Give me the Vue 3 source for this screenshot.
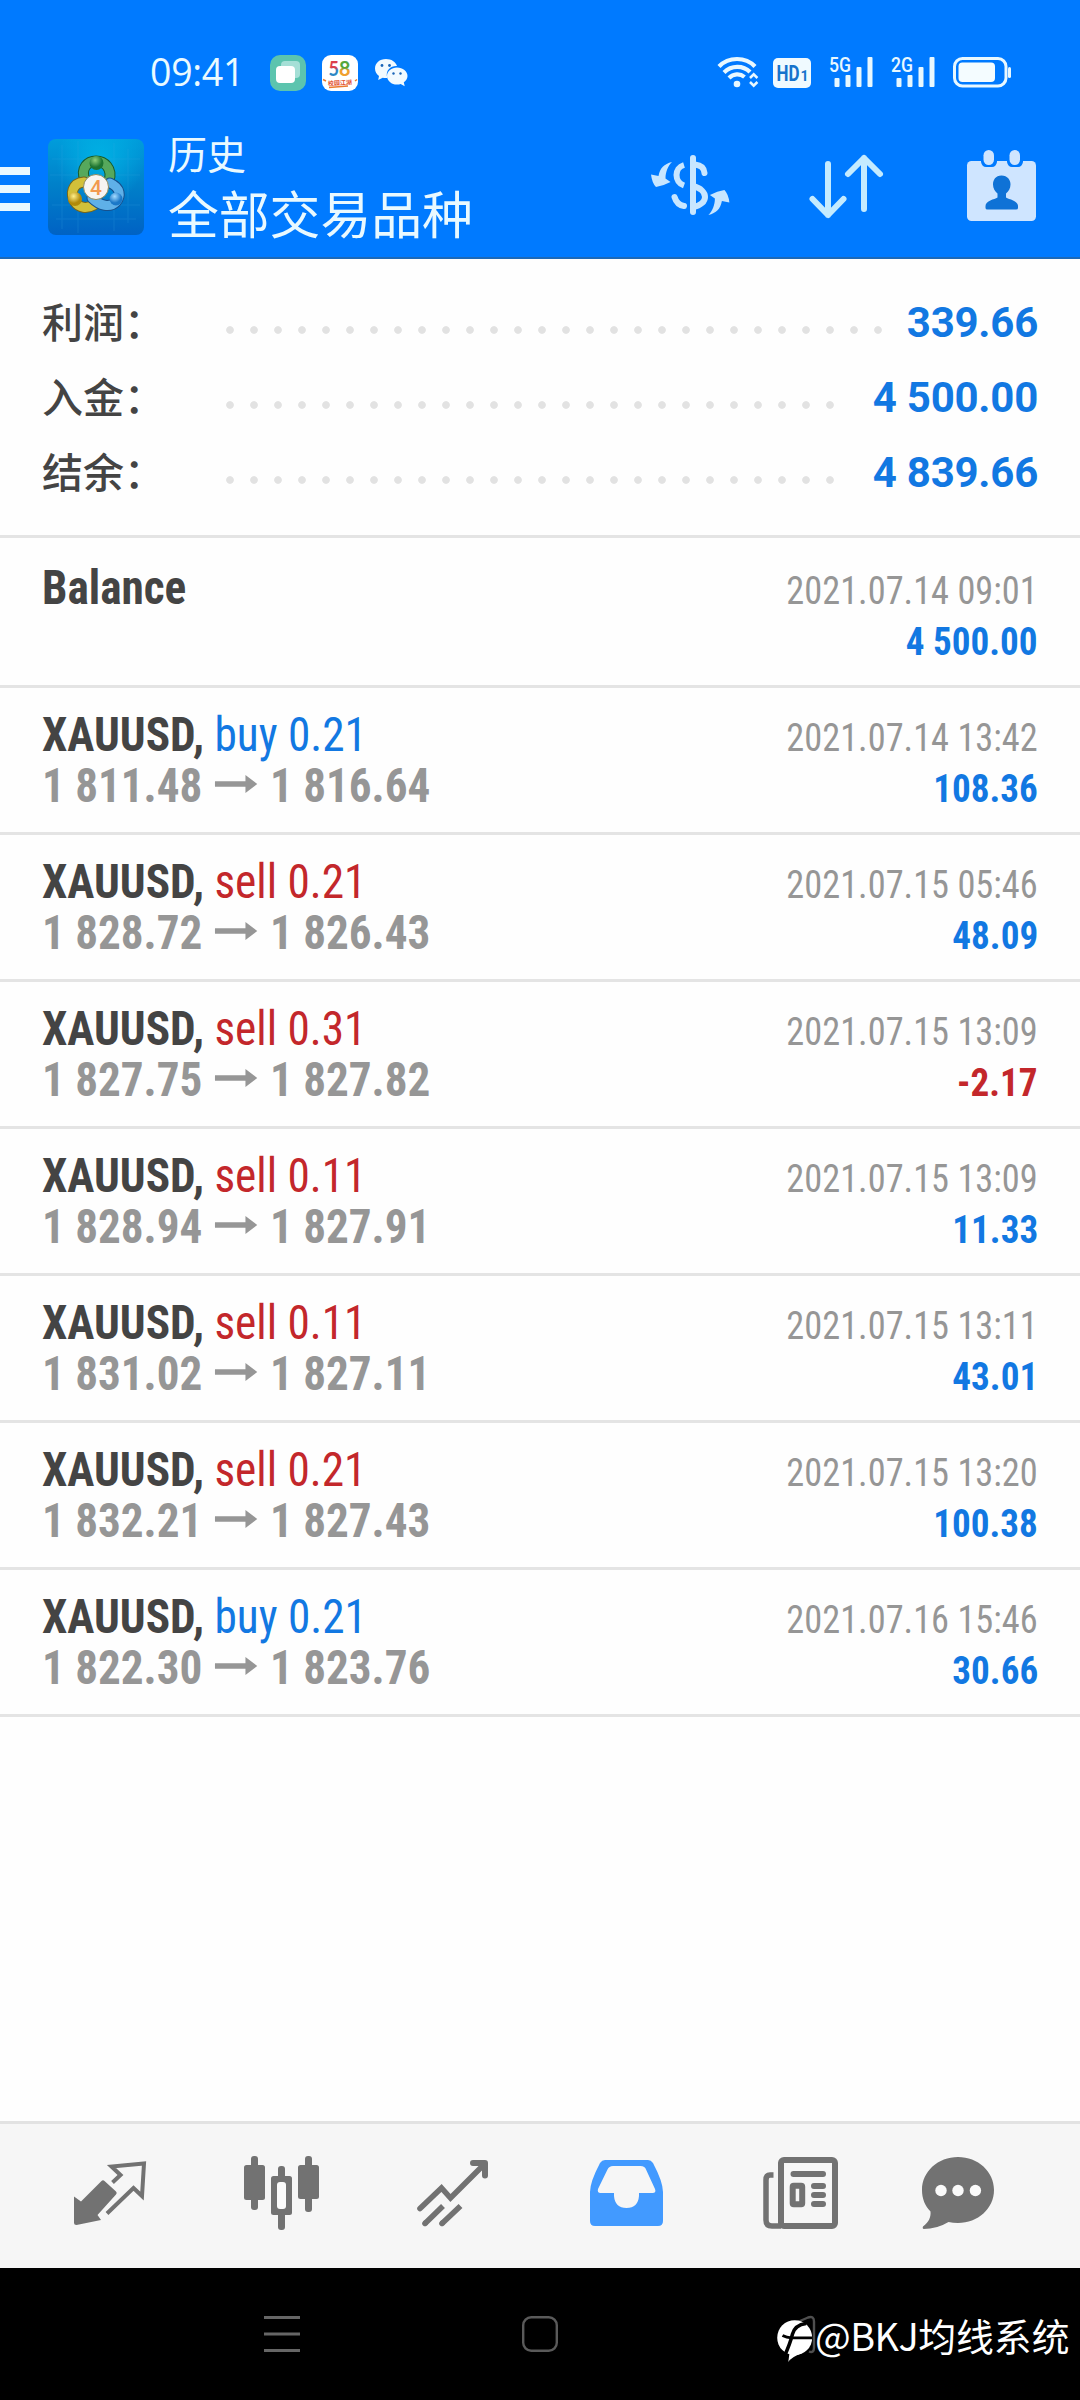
<script setup>
const summary = [
  { label: '利润', value: '339.66', dots: 28 },
  { label: '入金', value: '4 500.00', dots: 26 },
  { label: '结余', value: '4 839.66', dots: 26 },
]

const deals = [
  { side: 'buy', volume: '0.21', open: '1 811.48', close: '1 816.64', time: '2021.07.14 13:42', profit: '108.36' },
  { side: 'sell', volume: '0.21', open: '1 828.72', close: '1 826.43', time: '2021.07.15 05:46', profit: '48.09' },
  { side: 'sell', volume: '0.31', open: '1 827.75', close: '1 827.82', time: '2021.07.15 13:09', profit: '-2.17' },
  { side: 'sell', volume: '0.11', open: '1 828.94', close: '1 827.91', time: '2021.07.15 13:09', profit: '11.33' },
  { side: 'sell', volume: '0.11', open: '1 831.02', close: '1 827.11', time: '2021.07.15 13:11', profit: '43.01' },
  { side: 'sell', volume: '0.21', open: '1 832.21', close: '1 827.43', time: '2021.07.15 13:20', profit: '100.38' },
  { side: 'buy', volume: '0.21', open: '1 822.30', close: '1 823.76', time: '2021.07.16 15:46', profit: '30.66' },
]
</script>

<template>
  <div class="screen">
    <header class="header">
      <div class="status">
        <span class="clock">09:41</span>
        <svg class="app-a" width="36" height="36" viewBox="0 0 36 36">
          <rect width="36" height="36" rx="10" fill="#5cc4ae" />
          <rect x="11" y="6" width="19" height="17" rx="4" fill="#a5dfd6" />
          <rect x="6" y="11" width="19" height="17" rx="4" fill="#fff" />
        </svg>
        <svg class="app-b" width="36" height="36" viewBox="0 0 36 36">
          <defs>
            <linearGradient id="five" x1="0" y1="0" x2="0" y2="1"><stop offset=".5" stop-color="#dc3f4c" /><stop offset=".62" stop-color="#2d86c4" /></linearGradient>
            <linearGradient id="eight" x1="0" y1="0" x2="0" y2="1"><stop offset=".5" stop-color="#55a63a" /><stop offset=".62" stop-color="#f0a030" /></linearGradient>
          </defs>
          <rect width="36" height="36" rx="9" fill="#fff" />
          <g class="fifty-eight" font-size="21" font-weight="700">
            <text x="6.500" y="21" textLength="10.500" lengthAdjust="spacingAndGlyphs" fill="url(#five)">5</text>
            <text x="17" y="21" textLength="11.500" lengthAdjust="spacingAndGlyphs" fill="url(#eight)">8</text>
          </g>
          <text class="slogan" x="6" y="30" font-size="6" font-weight="700" textLength="24" fill="#e2512f" transform="rotate(-3 18 28)">校园江湖</text>
          <path d="M7 32.500l19-1.400M1 24.500l3 1.500M35 24.500l-2 1.500" stroke="#ea7a2f" stroke-width="1.500" />
        </svg>
        <svg class="wechat" width="33" height="29" viewBox="0 0 33 29">
          <path d="M11 1C4.500 1 0 5.200 0 10.500c0 3 1.500 5.600 4 7.400L3.200 22l4.500-2.300c1.500.4 3 .5 4.600.3C10 12 16 7.600 22 8 20.700 3.800 16.300 1 11 1z" fill="#f2fbff" />
          <path d="M22 9.500c-5.500 0-10 3.700-10 8.500s4.500 8.600 10 8.600c1.300 0 2.600-.2 3.700-.6l4 2.200-.9-3.900c2.300-1.600 3.700-3.800 3.700-6.300 0-4.800-4.700-8.500-10.500-8.500z" fill="#f2fbff" />
          <circle cx="7" cy="7.500" r="1.400" fill="#1a66b8" /><circle cx="14.500" cy="7.500" r="1.400" fill="#1a66b8" />
          <circle cx="18.500" cy="15.500" r="1.200" fill="#1a66b8" /><circle cx="25.500" cy="15.500" r="1.200" fill="#1a66b8" />
        </svg>
        <span class="grow"></span>
        <svg class="wifi" width="41" height="31" viewBox="0 0 41 31">
          <g fill="none" stroke="#e8f8ff" stroke-width="4.200">
            <path d="M1 9.500C10.500-.5 27.500-.5 37 9.500" />
            <path d="M6 15.500c7.500-7.400 19-7.400 26-.5" />
            <path d="M11 21c4.500-4.500 11-4.800 15.500-1" />
          </g>
          <circle cx="19" cy="27" r="3.300" fill="#e8f8ff" />
          <path d="M32 21l3.700-3.700 3.700 3.700M32 25l3.700 3.700 3.700-3.700" fill="none" stroke="#e8f8ff" stroke-width="2.500" />
        </svg>
        <svg class="hd" width="38" height="30" viewBox="0 0 38 30">
          <rect width="38" height="30" rx="5" fill="#f0faff" />
          <text x="3.500" y="23" font-size="22" font-weight="700" textLength="23" lengthAdjust="spacingAndGlyphs" fill="#1673cc">HD</text>
          <text x="27.500" y="23" font-size="14" font-weight="700" fill="#1673cc">1</text>
        </svg>
        <svg v-for="g in ['5G', '2G']" :key="g" class="signal" width="44" height="31" viewBox="0 0 44 31">
          <text x="0" y="14.500" font-size="20" font-weight="500" textLength="22" lengthAdjust="spacingAndGlyphs" fill="#e8f8ff">{{ g }}</text>
          <g fill="#e8f8ff">
            <rect x="5.500" y="21" width="5" height="9" rx="1" /><rect x="16.500" y="18" width="5" height="12" rx="1" />
            <rect x="27.500" y="10" width="5" height="20" rx="1" /><rect x="38.500" y="0" width="5" height="30" rx="1" />
          </g>
        </svg>
        <svg class="battery" width="59" height="31" viewBox="0 0 59 31">
          <rect x="1.500" y="1.500" width="51.500" height="27.500" rx="8" fill="none" stroke="#e8f8ff" stroke-width="3" />
          <rect x="5.500" y="5.500" width="36.500" height="19.500" rx="4" fill="#f4fcff" />
          <rect x="55" y="10" width="3" height="11" rx="1.500" fill="#e8f8ff" />
        </svg>
      </div>

      <div class="appbar">
        <div class="burger"><i></i><i></i><i></i></div>
        <svg class="logo" width="96" height="96" viewBox="0 0 96 96">
          <defs>
            <linearGradient id="tile" x1="0" y1="0" x2="0" y2="1">
              <stop offset="0" stop-color="#009ddb" /><stop offset=".5" stop-color="#007fc9" /><stop offset="1" stop-color="#0062c4" />
            </linearGradient>
            <radialGradient id="tg" cx=".4" cy=".3"><stop offset="0" stop-color="#8fd07c" /><stop offset="1" stop-color="#1d7431" /></radialGradient>
            <radialGradient id="ty" cx=".4" cy=".3"><stop offset="0" stop-color="#fff08a" /><stop offset="1" stop-color="#b08a0a" /></radialGradient>
            <radialGradient id="tb" cx=".4" cy=".3"><stop offset="0" stop-color="#a5dcff" /><stop offset="1" stop-color="#1b78c8" /></radialGradient>
            <radialGradient id="glow" gradientUnits="userSpaceOnUse" cx="52" cy="22" r="44"><stop offset="0" stop-color="#00c4ee" stop-opacity=".65" /><stop offset="1" stop-color="#00c4ee" stop-opacity="0" /></radialGradient>
          </defs>
          <rect width="96" height="96" rx="8" fill="url(#tile)" />
          <rect width="96" height="96" rx="8" fill="url(#glow)" />
          <path d="M14 6v84M30 2v92M66 4v88M80 10v74M4 20h88M2 36h90M4 66h88M8 80h80" stroke="#38b4e8" stroke-opacity=".14" stroke-width="1.500" />
          <g stroke-linecap="round" fill="none">
            <path d="M37 41C32 29 40 22 48 22s17 7 13 20" stroke="#195c2a" stroke-width="11" />
            <path d="M37 41C32 29 40 22 48 22s17 7 13 20" stroke="#56a85c" stroke-width="9" />
            <path d="M36 43c-12 1-14 12-9 20 4 6 12 7 19 3" stroke="#76651a" stroke-width="11" />
            <path d="M36 43c-12 1-14 12-9 20 4 6 12 7 19 3" stroke="#d2c03a" stroke-width="9" />
            <path d="M62 44c11 5 11 13 6 19-6 6-16 4-24-4" stroke="#17508c" stroke-width="11" />
            <path d="M62 44c11 5 11 13 6 19-6 6-16 4-24-4" stroke="#5fb0e8" stroke-width="9" />
          </g>
          <circle cx="48.500" cy="24" r="7" fill="url(#tg)" />
          <circle cx="27" cy="60" r="7" fill="url(#ty)" />
          <circle cx="68" cy="60" r="6.500" fill="url(#tb)" />
          <circle cx="48" cy="48" r="12.500" fill="#f7f5f2" stroke="#8d8a5e" stroke-width="1" />
          <text x="48" y="55.500" text-anchor="middle" font-size="21" font-weight="500" fill="#f29a50">4</text>
        </svg>
        <div class="titles">
          <div class="sub">历史</div>
          <div class="main">全部交易品种</div>
        </div>
        <span class="grow"></span>
        <svg class="act-currency" width="78" height="67" viewBox="0 0 78 67">
          <g fill="none" stroke="#c8e6ff" stroke-width="6">
            <path d="M42 3v54" stroke-linecap="round" />
            <path d="M33 10C23 13 23 27 33 30.500" />
            <path d="M44 9.500q9 1 9.500 8.500" stroke-linecap="round" />
            <path d="M42 31c16 4 16 18 0 21" />
            <path d="M33 51q-7-1-9.500-9" stroke-linecap="round" />
          </g>
          <path id="swap" d="M21 7C13 9 9 13 7.500 21L0 19.500Q1 28 5 32 12 31 19.500 27L14.500 23.500C14.500 17 17 11 21 7z" fill="#c8e6ff" />
          <use href="#swap" transform="rotate(180 39.200 33.500)" />
        </svg>
        <svg class="act-sort" width="74" height="65" viewBox="0 0 74 65">
          <path d="M19 9v51M3.500 44L19 60l15.500-16M55 3v51M39 19L55 3l16 16" fill="none" stroke="#c4ebff" stroke-width="6" stroke-linecap="round" stroke-linejoin="round" />
        </svg>
        <svg class="act-range" width="69" height="71" viewBox="0 0 69 71">
          <rect y="11" width="69" height="60" rx="4.500" fill="#cfe5ff" />
          <path d="M14 8h16v4q-1 5-5 5h-6q-4 0-5-5zM40 8h16v4q-1 5-5 5h-6q-4 0-5-5z" fill="#007aff" />
          <rect x="16.500" y="0" width="10.500" height="15" rx="5.200" fill="#cfe5ff" /><rect x="42.500" y="0" width="10.500" height="15" rx="5.200" fill="#cfe5ff" />
          <path d="M34.500 25.500c-6 0-8.500 4.500-8.500 9 0 4 2 7 4.500 9v4c-3 2-12 3-12 8.500V58q0 1.500 2 1.500h28.500q2 0 2-1.500v-2c0-5.500-9-6.500-12-8.500v-4c2.500-2 4.500-5 4.500-9 0-4.500-3-9-9-9z" fill="#0f72d6" />
        </svg>
      </div>
    </header>

    <section class="summary">
      <div v-for="row in summary" :key="row.label" class="sum-row">
        <span class="sum-label">{{ row.label }}：</span>
        <span class="leader" :style="{ width: row.dots * 24 + 'px' }"></span>
        <span class="sum-value">{{ row.value }}</span>
      </div>
    </section>

    <main class="list">
      <article class="deal first">
        <div class="line"><b class="symbol">Balance</b><span class="time">2021.07.14 09:01</span></div>
        <div class="line"><span>&nbsp;</span><b class="profit">4 500.00</b></div>
      </article>
      <article v-for="d in deals" :key="d.open" class="deal">
        <div class="line">
          <span class="title"><b class="symbol">XAUUSD,</b> <span :class="d.side">{{ d.side }} {{ d.volume }}</span></span>
          <span class="time">{{ d.time }}</span>
        </div>
        <div class="line">
          <b class="prices">{{ d.open }}<svg class="arrow" width="45" height="18" viewBox="0 0 43 18" preserveAspectRatio="none"><path d="M0 6.200h31V0l12 9-12 9v-6.300H0z" fill="#969696" /></svg>{{ d.close }}</b>
          <b class="profit" :class="{ loss: d.profit[0] === '-' }">{{ d.profit }}</b>
        </div>
      </article>
    </main>

    <nav class="tabs">
      <svg width="72" height="64" viewBox="0 0 72 64">
        <path d="M0 35.500L7 40.500 27.500 20q1.500-1.500 3 0L42 30.500q1.500 1.500 0 3L23.500 54l3.500 5L2.500 64Q0 64 0 61.500z" fill="#727272" />
        <path d="M38.500 21.500L46.500 14 37.500 5.500 70 2.500 68 35 59.500 27 33 52.500" fill="none" stroke="#727272" stroke-width="4" />
      </svg>
      <svg width="75" height="74" viewBox="0 0 75 74" fill="#727272">
        <rect width="21" height="35" y="9" rx="2.500" /><rect x="7" width="7" height="54" rx="3" />
        <rect x="54" width="21" height="34" y="9" rx="2.500" /><rect x="61" width="7" height="56" rx="3" />
        <rect x="34" y="10" width="7" height="64" rx="3" /><rect x="27" y="20" width="21" height="39" rx="2.500" />
        <rect x="33" y="26" width="9" height="27" rx="3" fill="#fafafa" />
      </svg>
      <svg width="71" height="66" viewBox="0 0 71 66" fill="none" stroke="#727272" stroke-width="5.600">
        <path d="M3 48.500L24.500 28l9 10L67.500 4" stroke-linejoin="miter" stroke-linecap="round" />
        <path d="M56 3h12v12.500" stroke-width="6" stroke-linecap="round" stroke-linejoin="round" />
        <path d="M26 46L8 63.500M43.500 46L25 63.500" /><path d="M8 63.400l.1-.1M25 63.400l.1-.1" stroke-linecap="round" />
      </svg>
      <svg width="73" height="66" viewBox="0 0 73 66">
        <path fill-rule="evenodd" fill="#429aff" d="M15 0h43q3 0 5 3Q73 22 73 32v29q0 5-5 5H5q-5 0-5-5V32Q0 22 10 3q2-3 5-3zM23 6q-4 0-5.500 3.500L8 29q-1 4 2.500 4H24v3q1 12 12.500 12T49 36v-3h13.500q4 0 2.500-4L56 9.500Q55 6 50.500 6z" />
      </svg>
      <svg width="75" height="72" viewBox="0 0 75 72" fill="none" stroke="#727272" stroke-width="6">
        <rect x="18" y="3" width="54" height="66" rx="3" />
        <path d="M10.500 18H7Q3 18 3 23v40q0 6 6 6h9" stroke-width="5.500" />
        <path d="M30.500 17h29.500M51 29h9M51 38h9M51 47h9" stroke-linecap="round" />
        <rect x="29.700" y="28.700" width="9.500" height="18.500" rx="1" />
      </svg>
      <svg width="72" height="72" viewBox="0 0 72 72">
        <path d="M36 0C56 0 72 14.500 72 33S56 66 36 66Q31 66 26.500 65 15 72 1.500 72 0 71 1 69.500C7 65 9 60 8.500 54.500 3 49 0 41.500 0 33 0 14.500 16 0 36 0z" fill="#727272" />
        <g fill="#fafafa"><circle cx="19" cy="33.500" r="5.700" /><circle cx="36" cy="33.500" r="5.700" /><circle cx="53.400" cy="33.500" r="5.700" /></g>
      </svg>
    </nav>

    <footer class="sysnav">
      <svg class="recent" width="36" height="36" viewBox="0 0 36 36"><path d="M0 1.500h36M0 18h36M0 34.500h36" stroke="#666" stroke-width="3" /></svg>
      <svg class="home" width="36" height="36" viewBox="0 0 36 36"><rect x="1.200" y="1.200" width="33.600" height="33.600" rx="8" fill="none" stroke="#5a5a5a" stroke-width="2.400" /></svg>
      <svg class="back" width="38" height="47" viewBox="0 0 38 47">
        <path d="M16 8L31 1.500q6-2 6 4v26q0 6-5 4" fill="none" stroke="#4f4f4f" stroke-width="2.400" />
        <circle cx="17.700" cy="21.700" r="17.500" fill="#fff" />
        <path d="M13 33l-1.700 13q3-5 14-9z" fill="#fff" />
        <path d="M29 7.500Q18 9 15.500 18 13 28 7.500 40" fill="none" stroke="#000" stroke-width="3.500" />
        <path d="M5.500 19.500q4 2.300 9 2.300h21" fill="none" stroke="#000" stroke-width="2.800" />
      </svg>
      <span class="mark"><span class="handle">@BKJ</span>均线系统</span>
    </footer>
  </div>
</template>

<style>
body { background: #fff; }
</style>

<style scoped>
.screen {
  width: 1080px;
  height: 2400px;
  display: flex;
  flex-direction: column;
  background: #fefefe;
  font-family: Roboto, "Noto Sans CJK SC", sans-serif;
  overflow: hidden;
}
svg { display: block; flex: none; overflow: visible; }
.grow { flex: 1; }

.header {
  box-sizing: border-box;
  height: 259px;
  background: #007aff;
  border-bottom: 2px solid #1c69b8;
}
.status {
  height: 73px;
  padding: 36px 68.5px 0 150px;
  display: flex;
  align-items: center;
}
.clock {
  width: 120px;
  font: 400 37.5px/54px "Open Sans", sans-serif;
  letter-spacing: -0.3px;
  padding-bottom: 2px;
  color: #eafaff;
}
.app-b { margin-left: 16px; }
.wechat { margin-left: 17px; }
.hd { margin-left: 14px; }
.signal { margin-left: 18px; }
.battery { margin-left: 18px; }
.fifty-eight { font-family: Lato, sans-serif; }

.appbar { display: flex; align-items: flex-start; height: 148px; padding-right: 44px; }
.burger { width: 30px; padding-top: 58px; display: flex; flex-direction: column; gap: 10px; }
.burger i { height: 8px; background: #e9f8ff; }
.logo { margin: 30px 0 0 18px; }
.titles { margin: 14px 0 0 24px; color: #e9f9ff; font-family: "Noto Sans CJK SC", sans-serif; }
.sub { font-size: 39px; line-height: 58px; }
.main { font-size: 50.8px; line-height: 60px; margin-top: 1px; }
.act-currency { margin-top: 46px; }
.act-sort { margin: 46px 0 0 80px; }
.act-range { margin: 41px 0 0 84px; }

.summary {
  box-sizing: border-box;
  height: 279px;
  padding: 26px 42px 0 42px;
  border-bottom: 3px solid #e4e4e4;
}
.sum-row { display: flex; align-items: center; height: 75px; }
.sum-label { width: 176px; white-space: nowrap; font: 500 41px/71px "Noto Sans CJK SC", sans-serif; padding-bottom: 4px; color: #444; }
.leader {
  height: 24px;
  margin-top: 14px;
  background: radial-gradient(circle at 12px 12px, #e2e2e2 3.4px, transparent 4.2px) 0 0 / 24px 24px repeat-x;
}
.sum-value { margin-left: auto; font-size: 42px; letter-spacing: -0.25px; font-weight: 700; color: #1278e2; white-space: nowrap; }

.list { flex: 1; font-family: "Roboto Condensed", Roboto, sans-serif; font-stretch: 75%; }
.deal {
  box-sizing: border-box;
  height: 147px;
  padding: 20.5px 42px 0;
  border-bottom: 3px solid #e4e4e4;
  white-space: nowrap;
}
.deal.first { height: 150px; padding-top: 24px; }
.line { display: flex; justify-content: space-between; align-items: baseline; height: 51px; line-height: 51px; font-size: 48px; }
.symbol { color: #444; font-weight: 700; }
.title, .line > .symbol { transform: scaleX(0.943); transform-origin: left; }
.buy { color: #1278e2; }
.sell { color: #c3272b; }
.time { font-size: 39px; color: #969696; transform: scaleX(0.932); transform-origin: right; }
.prices { color: #969696; display: flex; align-items: baseline; transform: scaleX(0.94); transform-origin: left; }
.arrow { margin: 0 13.5px 0 13.5px; position: relative; top: -9px; }
.profit { font-size: 39px; color: #1278e2; transform: scaleX(0.952); transform-origin: right; }
.profit.loss { color: #c3272b; }

.tabs {
  box-sizing: border-box;
  height: 147px;
  background: #f6f6f6;
  border-top: 3px solid #e2e2e2;
  display: flex;
  align-items: center;
  padding: 0 0 6px 74px;
}
.tabs svg + svg { margin-left: 99.5px; }
.tabs svg:nth-child(2) { margin-left: 98px; }
.tabs svg:nth-child(3) { margin-left: 98px; }
.tabs svg:nth-child(4) { margin-left: 102px; }
.tabs svg:last-child { margin-left: 84px; }

.sysnav { height: 132px; background: #000; display: flex; align-items: flex-start; }
.recent { margin: 48px 0 0 264px; }
.home { margin: 48px 0 0 222px; }
.back { margin: 48px 0 0 219px; }
.mark { color: #fff; font: 400 37.8px/60px "Noto Sans CJK SC", sans-serif; margin-top: 37px; white-space: nowrap; }
.handle { letter-spacing: -0.5px; }
</style>
